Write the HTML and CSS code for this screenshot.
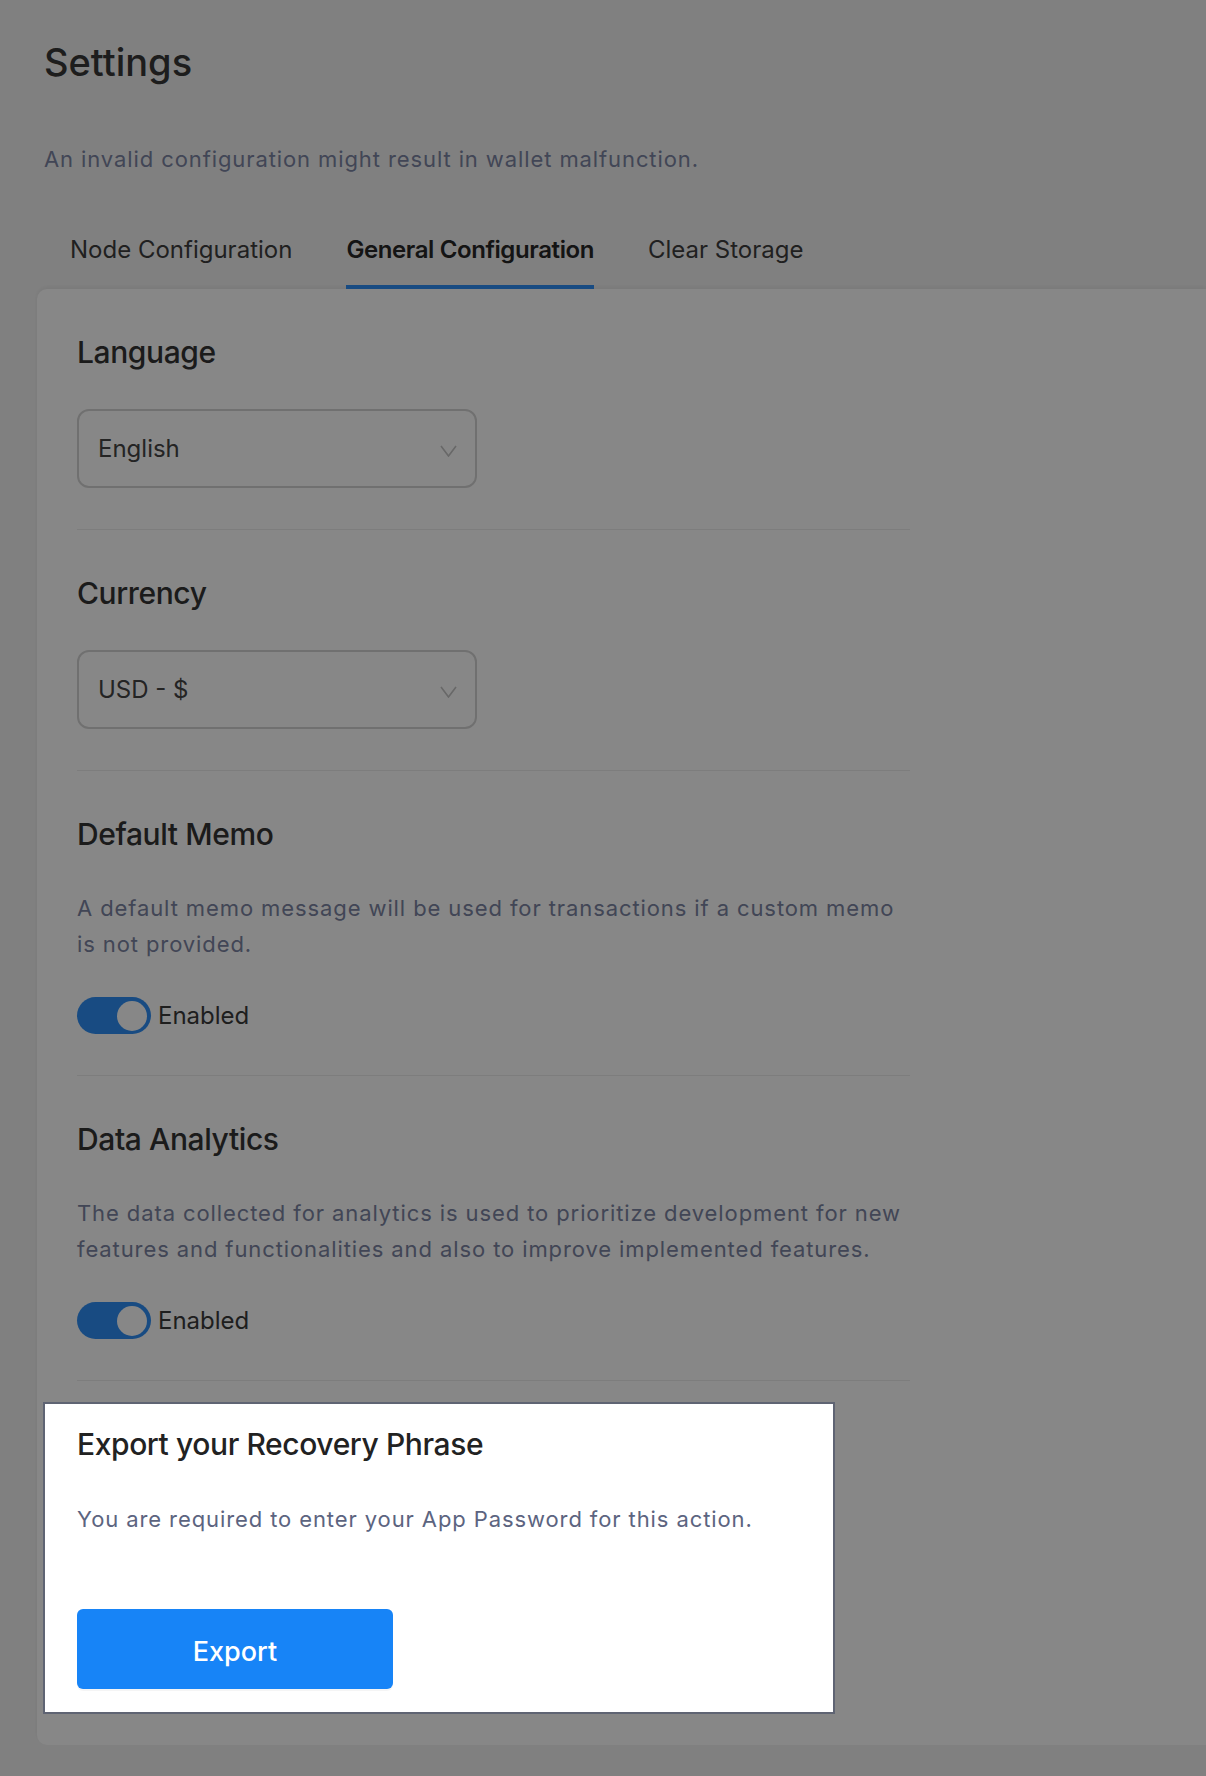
FILE: index.html
```html
<!DOCTYPE html>
<html lang="en">
<head>
<meta charset="utf-8">
<title>Settings</title>
<link rel="stylesheet" href="styles.css">
</head>
<body>
<div class="page">
  <header class="page-head">
    <h1 class="title">Settings</h1>
    <p class="subtitle">An invalid configuration might result in wallet malfunction.</p>
  </header>
  <nav class="tabs">
    <span class="tab">Node Configuration</span>
    <span class="tab active">General Configuration</span>
    <span class="tab">Clear Storage</span>
  </nav>
  <main class="card">
    <section class="section">
      <h2 class="section-title">Language</h2>
      <div class="select">
        <span class="select-value">English</span>
        <svg class="chevron" width="17" height="12" viewBox="0 0 17 12"><polyline points="1,1 8.5,11 16,1" fill="none" stroke="currentColor" stroke-width="1.6"/></svg>
      </div>
    </section>
    <section class="section">
      <h2 class="section-title">Currency</h2>
      <div class="select">
        <span class="select-value">USD - $</span>
        <svg class="chevron" width="17" height="12" viewBox="0 0 17 12"><polyline points="1,1 8.5,11 16,1" fill="none" stroke="currentColor" stroke-width="1.6"/></svg>
      </div>
    </section>
    <section class="section toggle-section">
      <h2 class="section-title">Default Memo</h2>
      <p class="desc">A default memo message will be used for transactions if a custom memo is not provided.</p>
      <div class="switch-row">
        <span class="switch on"><span class="knob"></span></span>
        <span class="switch-label">Enabled</span>
      </div>
    </section>
    <section class="section toggle-section">
      <h2 class="section-title">Data Analytics</h2>
      <p class="desc">The data collected for analytics is used to prioritize development for new features and functionalities and also to improve implemented features.</p>
      <div class="switch-row">
        <span class="switch on"><span class="knob"></span></span>
        <span class="switch-label">Enabled</span>
      </div>
    </section>
    <section class="spotlight">
      <h2 class="section-title spot-title">Export your Recovery Phrase</h2>
      <p class="desc spot-desc">You are required to enter your App Password for this action.</p>
      <button class="btn-primary" type="button">Export</button>
    </section>
  </main>
</div>
<div class="overlay"></div>
</body>
</html>
```

FILE: styles.css
```css
html, body {
  margin: 0;
  padding: 0;
}

body {
  background: #f2f2f2;
  font-family: Inter, "Noto Sans", "Liberation Sans", sans-serif;
  color: #333;
  overflow-x: hidden;
}

.page {
  padding: 39px 0 33px 37px;
}

.page-head {
  padding-left: 7px;
}

.title {
  margin: 0;
  font-size: 38px;
  line-height: 46px;
  font-weight: 500;
  color: #383838;
}

.subtitle {
  margin: 59px 0 0;
  font-size: 22px;
  line-height: 30px;
  letter-spacing: 0.9px;
  color: #7c84a2;
}

.tabs {
  display: flex;
  gap: 54px;
  margin-top: 61px;
  padding-left: 33px;
}

.tab {
  font-size: 24px;
  line-height: 30px;
  padding-bottom: 20px;
  border-bottom: 4px solid transparent;
  color: #3e3e3e;
}

.tab.active {
  font-weight: 600;
  letter-spacing: -0.4px;
  color: #262626;
  border-bottom-color: #2f8ff5;
}

.card {
  background: #fff;
  border-radius: 10px 0 0 10px;
  padding: 0 0 31px 40px;
  box-shadow: 0 -2px 4px rgba(0, 0, 0, 0.05);
}

.section {
  width: 833px;
  padding: 45px 0 41px;
  border-bottom: 1px solid #ededed;
}

.section-title {
  margin: 0 0 39px;
  font-size: 30px;
  line-height: 36px;
  font-weight: 500;
  letter-spacing: -0.4px;
  color: #333;
}

.toggle-section .section-title {
  margin-bottom: 38px;
}

.select {
  box-sizing: border-box;
  width: 400px;
  height: 79px;
  border: 2px solid #d4d4d4;
  border-radius: 12px;
  padding: 0 18px 0 19px;
  display: flex;
  align-items: center;
  justify-content: space-between;
}

.select-value {
  font-size: 24px;
  line-height: 30px;
  color: #444;
}

.chevron {
  color: #c4c4c4;
  margin-top: 4px;
}

.desc {
  margin: 0 0 35px;
  font-size: 22px;
  line-height: 36px;
  letter-spacing: 0.9px;
  color: #7c84a2;
}

.switch-row {
  display: flex;
  align-items: center;
  gap: 7px;
  height: 37px;
}

.switch {
  box-sizing: border-box;
  width: 74px;
  height: 37px;
  border-radius: 19px;
  background: #2f8ff5;
  padding: 3px 4px;
  display: flex;
  justify-content: flex-end;
  align-items: center;
}

.knob {
  width: 30px;
  height: 30px;
  border-radius: 50%;
  background: #fff;
}

.switch-label {
  font-size: 24px;
  line-height: 30px;
  color: #3a3a3a;
}

.spotlight {
  position: relative;
  z-index: 20;
  box-sizing: border-box;
  width: 792px;
  margin: 21px 0 0 -34px;
  padding: 22px 0 23px 32px;
  background: #fff;
  border: 2px solid #5f6473;
}

.spot-title {
  color: #222;
  margin-bottom: 39px;
}

.spot-desc {
  color: #5c6480;
  margin-bottom: 72px;
}

.btn-primary {
  display: block;
  width: 316px;
  height: 80px;
  padding: 4px 0 0;
  border: none;
  border-radius: 6px;
  background: #1784f7;
  color: #fff;
  font-family: Inter, "Noto Sans", "Liberation Sans", sans-serif;
  font-size: 27px;
  font-weight: 500;
  box-shadow: 0 2px 0 rgba(0, 0, 0, 0.04);
}

.overlay {
  position: fixed;
  inset: 0;
  z-index: 10;
  background: rgba(0, 0, 0, 0.47);
}
```
